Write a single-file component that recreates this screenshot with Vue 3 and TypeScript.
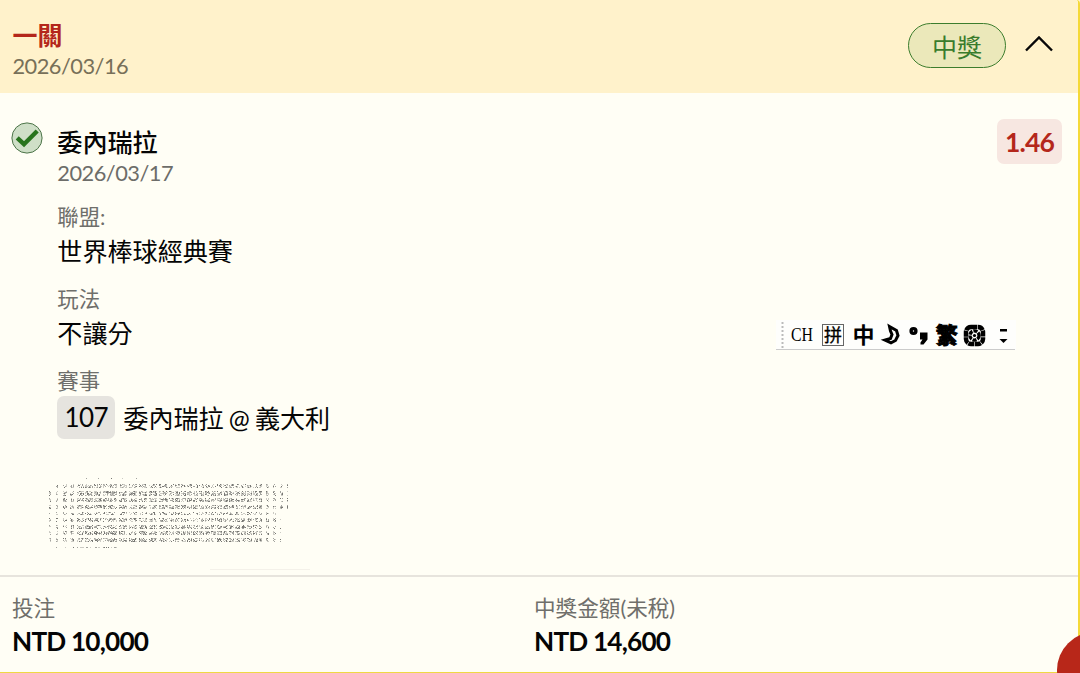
<script setup lang="ts">
interface Detail {
  label: string
  value: string
  code?: string
}

const details: Detail[] = [
  { label: '聯盟:', value: '世界棒球經典賽' },
  { label: '玩法', value: '不讓分' },
  { label: '賽事', value: '委內瑞拉 @ 義大利', code: '107' },
]

const totals = [
  { label: '投注', value: 'NTD 10,000' },
  { label: '中獎金額(未稅)', value: 'NTD 14,600' },
]

/* Speckled security print: rows of small marks. [top, height, left, right, density] */
const rows: number[][] = [
  [8, 1, 36, 92, 0.25],
  [14, 4, 7, 239, 0.6],
  [21, 5, 0, 239, 0.72],
  [28, 4, 0, 239, 0.76],
  [35, 4, 0, 239, 0.76],
  [42, 3, 0, 232, 0.5],
  [48, 4, 0, 232, 0.62],
  [55, 4, 0, 232, 0.66],
  [61, 4, 0, 232, 0.76],
  [68, 4, 0, 232, 0.7],
  [77, 1, 0, 70, 0.65],
]

let seed = 71
const next = () => {
  seed = (seed * 16807) % 2147483647
  return seed / 2147483647
}

/* Columns carry a shared glyph pattern, so the rows line up vertically. */
const columns = Array.from({ length: 240 }, () => Array.from({ length: 5 }, () => next()))

function isGap(x: number): boolean {
  if (x < 28) return x % 7 > (x < 12 ? 1 : 3)
  if (x < 62) return x % 9 === 8
  if (x < 115) return x % 10 > 7
  if (x < 210) return x % 6 === 5
  return x % 7 > 2
}

function speckles(level: number): string {
  let d = ''
  for (const [top, height, left, right, density] of rows) {
    for (let x = left; x < right; x++) {
      for (let y = 0; y < height; y++) {
        const tone = next()
        const on = columns[x][y] * 0.65 + next() * 0.35 < density
        if (on && !isGap(x) && Math.floor(tone * 3) === level) d += `M${x} ${top + y}h1v1h-1z`
      }
    }
  }
  return d
}

const layers = [
  { fill: '#777773', d: speckles(0) },
  { fill: '#a3a39e', d: speckles(1) },
  { fill: '#cccbc4', d: speckles(2) },
]
</script>

<template>
  <div class="screen">
    <main class="ticket">
      <header class="head">
        <div>
          <div class="title">一關</div>
          <div class="date">2026/03/16</div>
        </div>
        <div class="head-side">
          <span class="pill">中獎</span>
          <svg class="chevron" width="30" height="18" viewBox="0 0 30 18">
            <path d="M2 15.5 15 2.5 28 15.5" />
          </svg>
        </div>
      </header>

      <section class="body">
        <svg class="check" width="32" height="32" viewBox="0 0 32 32">
          <circle cx="16" cy="16" r="15.1" />
          <path d="M6.2 15.8 13 22.2 26.2 9" />
        </svg>
        <div class="pick">
          <div class="pick-name">委內瑞拉</div>
          <div class="date">2026/03/17</div>
          <div class="details">
            <div v-for="item in details" :key="item.label" class="detail">
              <div class="label">{{ item.label }}</div>
              <div class="value">
                <span v-if="item.code" class="code">{{ item.code }}</span>
                <span :class="{ match: item.code }">{{ item.value }}</span>
              </div>
            </div>
          </div>
        </div>
        <div class="odds">1.46</div>
      </section>

      <footer class="foot">
        <div v-for="total in totals" :key="total.label">
          <div class="label">{{ total.label }}</div>
          <div class="amount">{{ total.value }}</div>
        </div>
      </footer>
    </main>

    <svg class="print" width="270" height="104" viewBox="0 0 270 104">
      <path v-for="layer in layers" :key="layer.fill" :fill="layer.fill" :d="layer.d" />
      <path class="scratch" d="M161 99.5H261" />
    </svg>

    <svg class="ime" width="240" height="30" viewBox="0 0 240 30">
      <rect width="240" height="30" fill="#fefefc" />
      <path d="M0 29.5H239" stroke="#cbcbcb" />
      <path d="M6.5 2V28" stroke="#bbb" stroke-width="2" stroke-dasharray="2 2" />
      <text class="latin" x="15" y="20.500" textLength="22" lengthAdjust="spacingAndGlyphs">CH</text>
      <rect x="46.500" y="4.500" width="21" height="21" fill="none" stroke="#666" />
      <text x="48" y="21.500" font-size="18" stroke="#000" stroke-width=".3">拼</text>
      <text class="bold" x="76.500" y="23" font-size="22">中</text>
      <path
        d="M113.500 6.500 120.500 10.500 122 15.500 119.500 20.500 115 22.800 109 20 114.500 18.500 116 14.500 114.500 11z"
        fill="none"
        stroke="#000"
        stroke-width="3"
      />
      <circle cx="137.500" cy="11" r="2.400" fill="none" stroke="#000" stroke-width="3.400" />
      <path d="M144 12.500h7.500v7l-4 5h-3v-2l2-3h-2.500z" />
      <text class="heavy" x="160" y="23.300" font-size="21.500" stroke="#000" stroke-width="1">繁</text>
      <g fill="none" stroke="#000">
        <rect x="190" y="7" width="17" height="17" rx="5" stroke-width="4.500" stroke-dasharray="6 .6" />
        <circle cx="198.500" cy="15.500" r="4.600" stroke-width="3.400" stroke-dasharray="4 1" />
      </g>
      <circle cx="198.500" cy="15.500" r="1.600" />
      <path d="M224 9h7v2.500h-7zM223.500 19h8l-4 4z" />
    </svg>

    <span class="bubble"></span>
  </div>
</template>

<style>
body {
  margin: 0;
  overflow: hidden;
}
</style>

<style scoped>
.screen {
  position: relative;
  width: 1080px;
  height: 673px;
  overflow: hidden;
  background: #fff2cb;
}
.ticket {
  box-sizing: border-box;
  display: flex;
  flex-direction: column;
  height: 100%;
  overflow: hidden;
  background: #fffef5;
  border-right: 2px solid #f5d938;
  border-bottom: 1px solid #efd844;
  border-top-right-radius: 4px;
  color: #050505;
  font-family: Lato, "Noto Sans CJK TC", sans-serif;
}
.head {
  box-sizing: border-box;
  display: flex;
  justify-content: space-between;
  height: 93px;
  padding: 20px 24px 0 12.4px;
  background: #fff2cb;
}
.title {
  color: #b4271b;
  font-size: 25px;
  font-weight: 700;
  line-height: 30px;
}
.date {
  color: #6d6d69;
  font-size: 21.8px;
  letter-spacing: -0.5px;
  line-height: 30px;
}
.head .date {
  color: #777059;
  line-height: 31px;
}
.head-side {
  display: flex;
  gap: 18px;
  padding-top: 3px;
}
.pill {
  box-sizing: border-box;
  width: 98px;
  height: 45px;
  border: 1px solid #3c7d2d;
  border-radius: 23px;
  background: #ebe8ba;
  color: #397c2c;
  font-size: 25px;
  line-height: 46px;
  text-align: center;
}
.chevron {
  margin-top: 12px;
}
.chevron path {
  fill: none;
  stroke: #080808;
  stroke-width: 2.4;
}
.body {
  display: flex;
  height: 482px;
}
.check {
  flex: none;
  margin: 29px 14px 0 11.3px;
}
.check circle {
  fill: #cfdfc7;
  stroke: #4c7448;
  stroke-width: 1;
}
.check path {
  fill: none;
  stroke: #28741d;
  stroke-width: 4.4;
}
.pick {
  flex: 1;
  padding-top: 34px;
}
.pick-name {
  margin-bottom: 1px;
  font-size: 25.1px;
  font-weight: 500;
  line-height: 30px;
}
.details {
  display: grid;
  gap: 13px;
  margin-top: 13px;
}
.detail {
  height: 69px;
}
.label {
  color: #6f6f6b;
  font-size: 21.4px;
  line-height: 32px;
}
.value {
  display: flex;
  align-items: center;
  gap: 8px;
  height: 37px;
  font-size: 25.1px;
  line-height: 37px;
  white-space: nowrap;
}
.code {
  flex: none;
  width: 58px;
  height: 43px;
  margin-top: 3px;
  border-radius: 7px;
  background: #e6e4df;
  font-size: 26px;
  letter-spacing: -0.6px;
  line-height: 43px;
  text-align: center;
}
.match {
  padding-top: 5px;
  word-spacing: -1.3px;
}
.odds {
  width: 65px;
  height: 45px;
  margin: 26px 16px 0 0;
  border-radius: 7px;
  background: #f7e7e1;
  color: #b4271b;
  font-size: 26.5px;
  font-weight: 700;
  letter-spacing: -0.8px;
  line-height: 46px;
  text-align: center;
}
.foot {
  box-sizing: border-box;
  display: grid;
  grid-template-columns: 522px 1fr;
  flex: 1;
  padding: 15px 0 0 12px;
  border-top: 2px solid #e7e4dd;
}
.foot .label {
  font-size: 21.6px;
}
.amount {
  font-size: 26.2px;
  font-weight: 700;
  letter-spacing: -0.8px;
  line-height: 35px;
}
.print {
  position: absolute;
  left: 49px;
  top: 470px;
}
.scratch {
  stroke: #f4f1e9;
}
.ime {
  position: absolute;
  left: 776px;
  top: 320px;
  overflow: visible;
  font-family: "Noto Sans CJK TC", sans-serif;
}
.latin {
  font: 19px "Liberation Serif", serif;
}
.bold {
  font-weight: 700;
}
.heavy {
  font-weight: 900;
}
.bubble {
  position: absolute;
  left: 1057px;
  top: 632px;
  width: 76px;
  height: 76px;
  border-radius: 50%;
  background: #b82719;
}
</style>
